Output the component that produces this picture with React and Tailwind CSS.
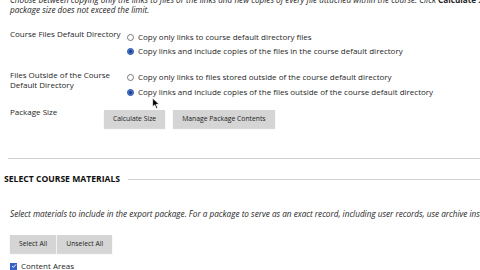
import React from 'react';

function Radio({ checked }) {
  if (checked) {
    return (
      <span className="w-[7px] h-[7px] rounded-full bg-[#4a78d4] border border-[#2c55a8] flex items-center justify-center shrink-0">
        <span className="w-[3px] h-[3px] rounded-full bg-[#1d3a7a]" />
      </span>
    );
  }
  return <span className="w-[7px] h-[7px] rounded-full border border-[#777] bg-white shrink-0" />;
}

function Opcion({ checked, children }) {
  return (
    <div className="flex items-center gap-[4px] h-[14px] whitespace-nowrap">
      <Radio checked={checked} />
      <span>{children}</span>
    </div>
  );
}

function Boton({ children }) {
  return (
    <button className="bg-[#d5d5d5] text-[#222] text-[6.8px] h-[18px] px-[9px] shadow-[0_1px_1px_rgba(0,0,0,0.15)] whitespace-nowrap">
      {children}
    </button>
  );
}

export default function App() {
  return (
    <div className="w-[480px] h-[270px] overflow-hidden bg-white relative font-['Open_Sans',sans-serif] text-[#262626] text-[8px]">
      {/* texto de arriba, cortado */}
      <p className="italic text-[8.2px] leading-[10px] pl-[10px] mt-[-5px] whitespace-nowrap">
        Choose between copying only the links to files or the links and new copies of every file attached within the course. Click{' '}
        <span className="not-italic font-bold">Calculate Size</span> to ensure the
        <br />
        package size does not exceed the limit.
      </p>

      {/* Course Files Default Directory */}
      <div className="flex items-start mt-[14px]">
        <div className="w-[127px] pl-[10px] leading-[10px] whitespace-nowrap">Course Files Default Directory</div>
        <div className="flex flex-col mt-[1px]">
          <Opcion>Copy only links to course default directory files</Opcion>
          <Opcion checked>Copy links and include copies of the files in the course default directory</Opcion>
        </div>
      </div>

      {/* Files Outside */}
      <div className="flex items-start mt-[12px]">
        <div className="w-[127px] pl-[10px] leading-[10px] whitespace-nowrap">
          Files Outside of the Course
          <br />
          Default Directory
        </div>
        <div className="flex flex-col gap-[1px]">
          <Opcion>Copy only links to files stored outside of the course default directory</Opcion>
          <Opcion checked>Copy links and include copies of the files outside of the course default directory</Opcion>
        </div>
      </div>

      {/* Package Size */}
      <div className="flex items-start mt-[8px]">
        <div className="w-[104px] pl-[10px] leading-[10px]">Package Size</div>
        <div className="flex gap-[8px] mt-[3px]">
          <Boton>Calculate Size</Boton>
          <Boton>Manage Package Contents</Boton>
        </div>
      </div>

      <div className="ml-[8px] mt-[30px] border-t border-[#cfcfcf]" />

      {/* Select Course Materials */}
      <div className="flex items-center h-[12px] mt-[14px] pl-[4px]">
        <h2 className="font-bold text-[8.6px] text-[#111] whitespace-nowrap">SELECT COURSE MATERIALS</h2>
        <div className="flex-1 ml-[8px] border-t border-[#d2d2d2]" />
      </div>

      <p className="italic text-[8.2px] pl-[10px] mt-[24px] whitespace-nowrap leading-[10px]">
        Select materials to include in the export package. For a package to serve as an exact record, including user records, use archive instead.
      </p>

      <div className="flex gap-[1px] pl-[10px] mt-[16px]">
        <Boton>Select All</Boton>
        <Boton>Unselect All</Boton>
      </div>

      <div className="flex items-center gap-[4px] pl-[10px] mt-[9px] h-[8px]">
        <span className="w-[7px] h-[7px] bg-[#3562c4] flex items-center justify-center shrink-0">
          <svg viewBox="0 0 8 8" className="w-[6px] h-[6px]">
            <path d="M1.5 4.2 L3.2 5.8 L6.5 2" fill="none" stroke="#fff" strokeWidth="1.3" />
          </svg>
        </span>
        <span>Content Areas</span>
      </div>

      {/* puntero del mouse */}
      <svg viewBox="0 0 12 18" className="absolute left-[152px] top-[97px] w-[8px] h-[13px]">
        <path d="M1 1 L1 14 L4 11 L6.5 16.5 L8.5 15.6 L6 10.3 L10.5 10.3 Z" fill="#000" stroke="#fff" strokeWidth="1" />
      </svg>
    </div>
  );
}
